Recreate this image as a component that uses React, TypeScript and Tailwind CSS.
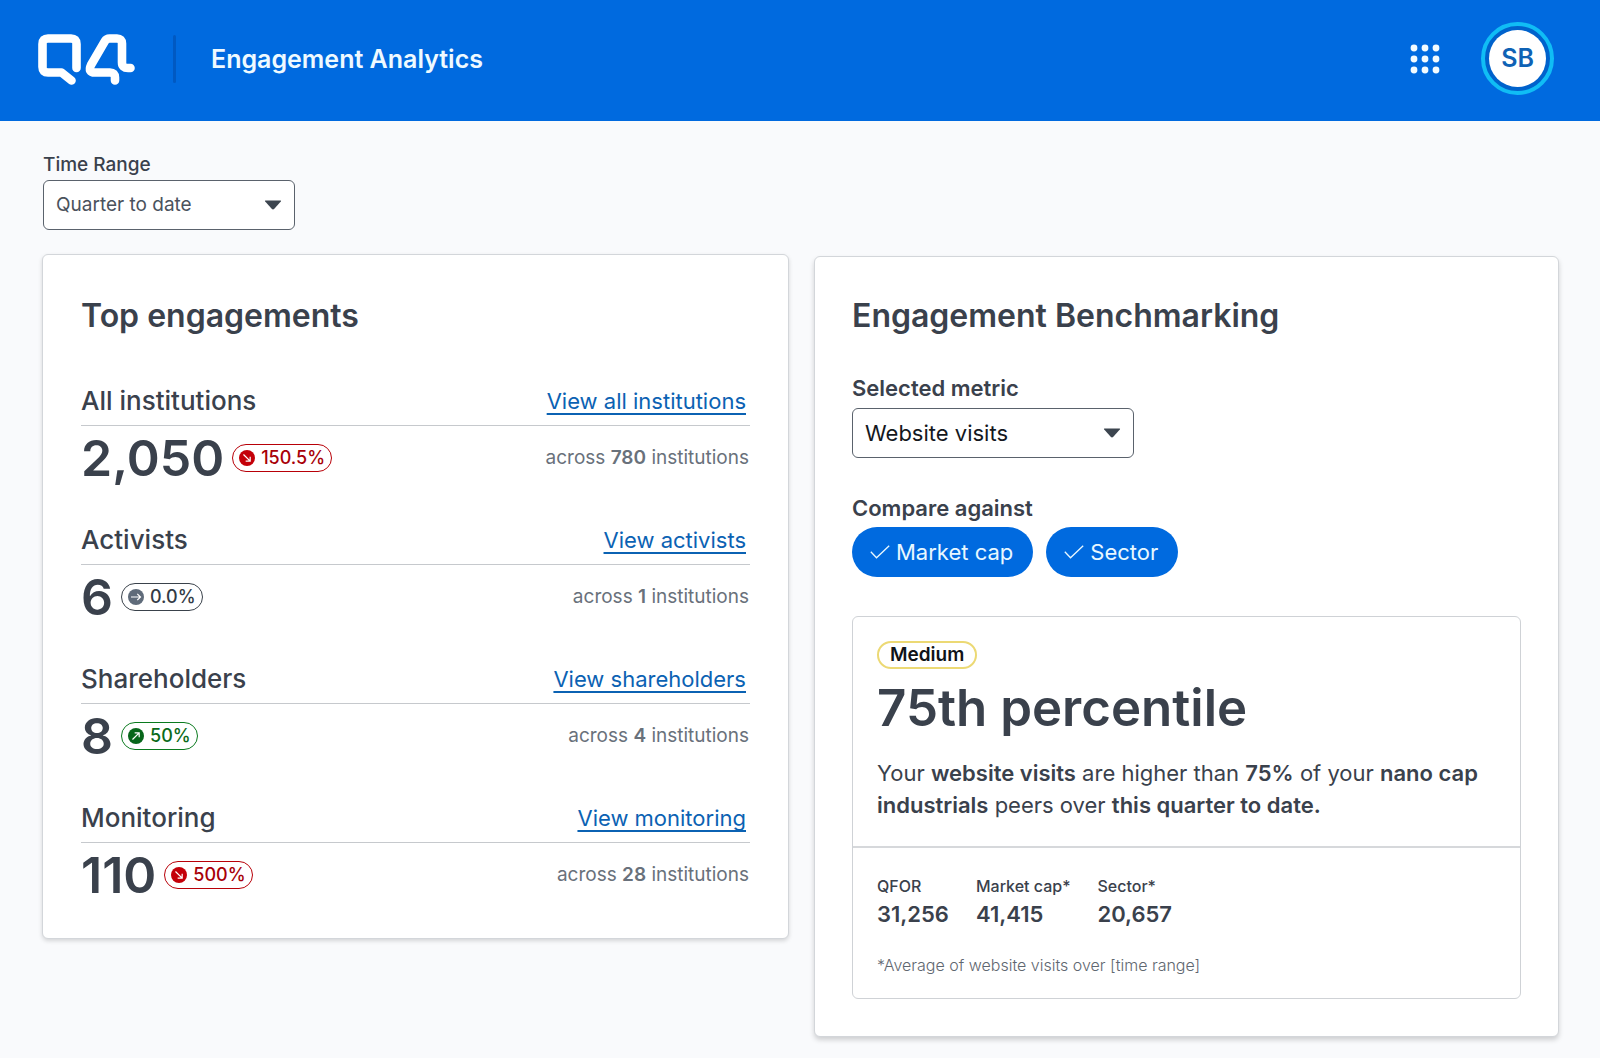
import React from "react";

type Trend = "down" | "flat" | "up";

const ROWS: { title: string; link: string; value: string; change: string; trend: Trend; count: string }[] = [
  { title: "All institutions", link: "View all institutions", value: "2,050", change: "150.5%", trend: "down", count: "780" },
  { title: "Activists", link: "View activists", value: "6", change: "0.0%", trend: "flat", count: "1" },
  { title: "Shareholders", link: "View shareholders", value: "8", change: "50%", trend: "up", count: "4" },
  { title: "Monitoring", link: "View monitoring", value: "110", change: "500%", trend: "down", count: "28" },
];

const TREND_STYLE: Record<Trend, string> = {
  down: "border-[#b80008] text-[#a80008]",
  flat: "border-[#3a424b] text-[#333b45]",
  up: "border-[#0a7a1e] text-[#0a6a1a]",
};

const TREND_ICON: Record<Trend, { fill: string; rotate: number }> = {
  down: { fill: "#c40009", rotate: 45 },
  flat: { fill: "#5f6b7a", rotate: 0 },
  up: { fill: "#07661a", rotate: -45 },
};

function Logo() {
  return (
    <svg width="98" height="54" viewBox="0 -1 98 54" fill="none" stroke="#fff" strokeWidth="8.6" strokeLinecap="round" strokeLinejoin="round" role="img" aria-label="Q4">
      <path d="M38.5 35V11Q38.500 5.500 33 5.500H10Q4.500 5.500 4.500 11V34Q4.500 39.500 10 39.500H23.500L33.500 47.500" />
      <path d="M92.500 35H90Q84 35 84 29.500V10.500Q84 5.500 79 5.500H71.500Q68.500 5.500 67 8L53 32Q49.500 39.500 57 39.500H72Q77 39.500 77 44.500V47.500" />
    </svg>
  );
}

function TrendBadge({ trend, children }: { trend: Trend; children: React.ReactNode }) {
  const icon = TREND_ICON[trend];
  return (
    <span className={`flex h-7 items-center gap-1.5 rounded-full border px-1.5 text-[18px] leading-6 font-medium ${TREND_STYLE[trend]}`}>
      <svg width="16" height="16" viewBox="0 0 16 16" fill="none" aria-hidden="true">
        <circle cx="8" cy="8" r="8" fill={icon.fill} />
        <path d="M3 8h9.500M9.300 4.800 12.500 8l-3.200 3.200" stroke="#fff" strokeWidth="1.200" transform={`rotate(${icon.rotate} 8 8)`} />
      </svg>
      {children}
    </span>
  );
}

function Select({ id, value, className }: { id: string; value: string; className: string }) {
  return (
    <div className={`grid items-center ${className}`}>
      <select id={id} defaultValue={value} className="col-start-1 row-start-1 h-[50px] w-full appearance-none rounded-md border border-[#5a626c] bg-white pl-3">
        <option>{value}</option>
      </select>
      <svg className="pointer-events-none col-start-1 row-start-1 mr-[13px] justify-self-end" width="18" height="10" viewBox="0 0 18 10" aria-hidden="true">
        <path d="M1.500.500h15q1 0 .3.900L10.300 8.800Q9 10 7.700 8.800L1.200 1.400Q.5.500 1.500.500Z" fill="#3c454f" />
      </svg>
    </div>
  );
}

function Chip({ children }: { children: React.ReactNode }) {
  return (
    <button type="button" aria-pressed="true" className="flex h-[50px] items-center gap-1.5 rounded-full bg-[#006adf] pr-5 pl-[18px] text-[22px] text-[#e8f8ff]">
      <svg width="20" height="14" viewBox="0 0 20 14" fill="none" stroke="currentColor" strokeWidth="1.300" aria-hidden="true">
        <path d="M.8 6.800 6.500 12.800 19.200.8" />
      </svg>
      {children}
    </button>
  );
}

function Stat({ label, value }: { label: string; value: string }) {
  return (
    <div>
      <dt className="text-[16px] leading-5 font-medium">{label}</dt>
      <dd className="mt-1 text-[22px] leading-7 font-semibold">{value}</dd>
    </div>
  );
}

export default function App() {
  return (
    <div className="min-h-screen bg-[#f9fafc] font-['Inter',sans-serif] text-[#3a414c]">
      <header className="flex h-[121px] items-center bg-[#006adf] pr-[46px] pb-1 pl-[38px]">
        <Logo />
        <div className="ml-[37px] h-12 w-[3px] rounded-sm bg-[#0059c2]" />
        <h1 className="ml-[35px] text-[25px] leading-8 font-semibold text-[#effaff]">Engagement Analytics</h1>
        <button type="button" aria-label="Apps" className="mr-[41px] ml-auto">
          <svg width="30" height="30" viewBox="0 0 30 30" fill="#f2fbff">
            {[4, 15, 26].map((y) => [4, 15, 26].map((x) => <circle key={`${x}-${y}`} cx={x} cy={y} r="3.400" />))}
          </svg>
        </button>
        <button type="button" aria-label="Account" className="flex size-[73px] items-center justify-center rounded-full border-4 border-[#10bdf5] bg-[#0062cc]">
          <span className="flex size-[57px] items-center justify-center rounded-full bg-white text-[25px] font-semibold text-[#0f62b5]">SB</span>
        </button>
      </header>

      <main className="pr-[41px] pb-5 pl-[42px]">
        <div className="pt-[30px] pl-px">
          <label htmlFor="range" className="block text-[19px] leading-7 font-medium">Time Range</label>
          <Select id="range" value="Quarter to date" className="mt-px w-[252px] text-[19px] text-[#4a525c]" />
        </div>

        <div className="mt-6 grid grid-cols-[747fr_745fr] items-start gap-[25px]">
          <section className="rounded-md border border-[#d3d6da] bg-white px-[38px] pt-[41px] pb-[35px] shadow-[0_2px_4px_rgba(0,0,0,0.15)]">
            <h2 className="text-[32px] leading-10 font-semibold">Top engagements</h2>
            <div className="mt-[49px] flex flex-col gap-[38px]">
              {ROWS.map((r) => (
                <div key={r.title}>
                  <div className="flex items-center justify-between border-b border-[#c6c9cd] pb-2">
                    <h3 className="text-[26px] leading-8 font-medium">{r.title}</h3>
                    <a href="#" className="mr-1 text-[22px] leading-8 text-[#0b62b3] underline decoration-2 underline-offset-4 [text-decoration-skip-ink:none]">{r.link}</a>
                  </div>
                  <div className="mt-1 flex h-14 items-center">
                    <span className="text-[50px] leading-[56px] font-semibold">{r.value}</span>
                    <span className="ml-2"><TrendBadge trend={r.trend}>{r.change}</TrendBadge></span>
                    <span className="mr-px ml-auto text-[19px] text-[#69717b]">
                      across <b className="font-semibold">{r.count}</b> institutions
                    </span>
                  </div>
                </div>
              ))}
            </div>
          </section>

          <section className="mt-0.5 rounded-md border border-[#d3d6da] bg-white px-[37px] pt-[39px] pb-[37px] shadow-[0_3px_5px_rgba(0,0,0,0.17)]">
            <h2 className="text-[32px] leading-10 font-semibold">Engagement Benchmarking</h2>
            <label htmlFor="metric" className="mt-[38px] block text-[22px] leading-7 font-semibold">Selected metric</label>
            <Select id="metric" value="Website visits" className="mt-1.5 w-[282px] text-[22px] text-[#14181d]" />
            <h3 className="mt-9 text-[22px] leading-7 font-semibold">Compare against</h3>
            <div className="mt-[5px] flex gap-[13px]">
              <Chip>Market cap</Chip>
              <Chip>Sector</Chip>
            </div>
            <div className="mt-[39px] rounded-md border border-[#cfd2d6]">
              <div className="border-b-2 border-[#d6d8db] px-6 pt-6 pb-[25px]">
                <span className="flex h-7 w-fit items-center rounded-full border-2 border-[#ecd974] px-[11px] text-[19px] font-semibold text-[#101317]">Medium</span>
                <p className="mt-[11px] text-[51px] leading-[56px] font-semibold">75th percentile</p>
                <p className="mt-[21px] text-[22px] leading-8 [&_b]:font-semibold">
                  Your <b>website visits</b> are higher than <b>75%</b> of your <b>nano cap industrials</b> peers over <b>this quarter to date.</b>
                </p>
              </div>
              <div className="px-6 pt-7 pb-[21px]">
                <dl className="flex gap-[27px]">
                  <Stat label="QFOR" value="31,256" />
                  <Stat label="Market cap*" value="41,415" />
                  <Stat label="Sector*" value="20,657" />
                </dl>
                <p className="mt-[25px] text-[16px] leading-6 font-light text-[#5f6770]">*Average of website visits over [time range]</p>
              </div>
            </div>
          </section>
        </div>
      </main>
    </div>
  );
}
